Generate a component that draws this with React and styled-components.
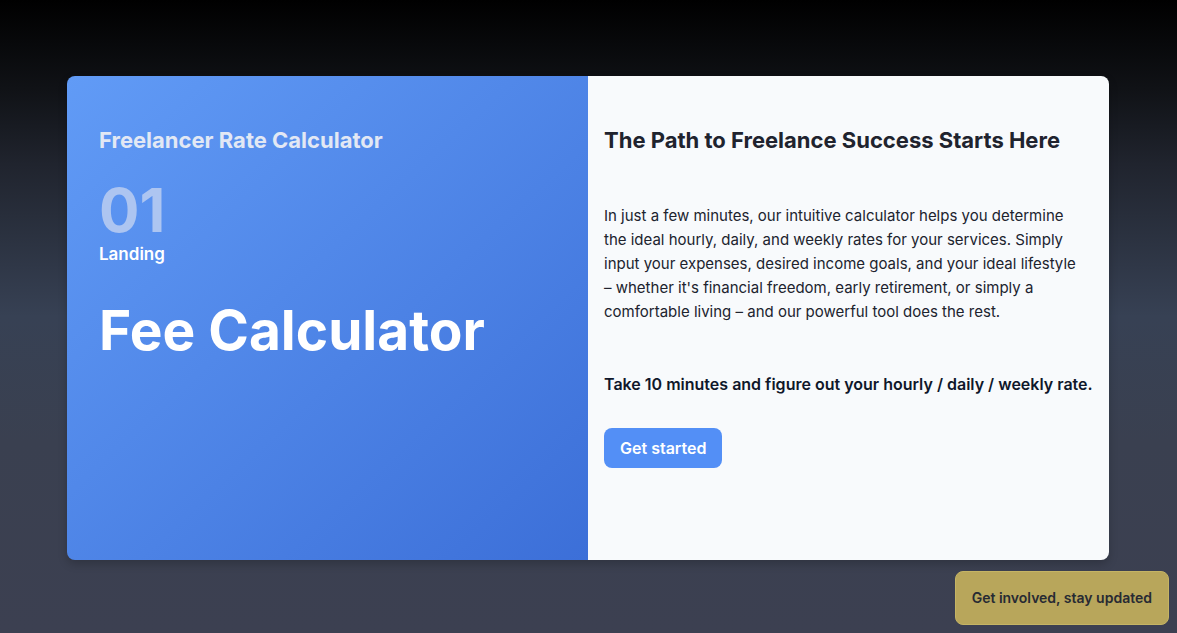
import React from "react";
import styled, { createGlobalStyle } from "styled-components";

const GlobalStyle = createGlobalStyle`
  *, *::before, *::after { box-sizing: border-box; }
  body {
    margin: 0;
    font-family: Inter, "Liberation Sans", sans-serif;
    font-size: 16px;
    line-height: 24px;
    color: #20232e;
  }
  h1, h2, p { margin: 0; }
`;

const Page = styled.main`
  min-height: 100vh;
  padding: 76px 68px 73px 67px;
  background: linear-gradient(to bottom, #000 0%, #101216 14%, #20242e 26%, #374154 50%, #3a4050 70%, #3c4051 100%);
  display: flex;
  flex-direction: column;
`;

const Card = styled.section`
  flex: 1;
  display: grid;
  grid-template-columns: 1fr 1fr;
  border-radius: 8px;
  overflow: hidden;
  box-shadow: 0 4px 10px rgba(0, 0, 0, 0.2);

  @media (max-width: 760px) {
    grid-template-columns: 1fr;
  }
`;

const Panel = styled.div`
  display: flex;
  flex-direction: column;
  align-items: flex-start;
`;

const IntroPanel = styled(Panel)`
  padding: 48px 32px;
  color: #fff;
  background: linear-gradient(to bottom right, #619bf6, #3c6fd8);
`;

const DetailPanel = styled(Panel)`
  padding: 48px 16px;
  background: #f8fafc;
`;

const Heading = styled.h2`
  font-size: 22px;
  line-height: 32px;
  font-weight: 700;
  color: ${({ $light }) => ($light ? "#e2e8f4" : "#20232e")};
`;

const StepNumber = styled.p`
  margin-top: 24px;
  font-size: 60px;
  line-height: 60px;
  font-weight: 700;
  color: #adc5f1;
`;

const StepName = styled.p`
  font-size: 17px;
  line-height: 28px;
  font-weight: 600;
`;

const Title = styled.h1`
  margin-top: 32px;
  font-size: 55px;
  line-height: 60px;
  font-weight: 700;
`;

const Description = styled.p`
  max-width: 480px;
  margin-top: 48px;
  font-size: 15px;
`;

const Callout = styled.p`
  margin-top: 48px;
  font-weight: 600;
  color: #0f172a;
`;

const StartButton = styled.button`
  margin-top: 32px;
  padding: 8px 16px;
  border: 0;
  border-radius: 8px;
  font: inherit;
  font-weight: 600;
  color: #fff;
  background: #538ff6;
  cursor: pointer;
`;

const UpdatesButton = styled.button`
  position: fixed;
  right: 8px;
  bottom: 8px;
  padding: 16px;
  border: 1px solid #c5b464;
  border-radius: 8px;
  font: inherit;
  font-size: 14px;
  line-height: 20px;
  font-weight: 600;
  color: #272a33;
  background: #b8a65b;
  cursor: pointer;
`;

export default function App() {
  return (
    <>
      <GlobalStyle />
      <Page>
        <Card>
          <IntroPanel>
            <Heading $light>Freelancer Rate Calculator</Heading>
            <StepNumber>01</StepNumber>
            <StepName>Landing</StepName>
            <Title>Fee Calculator</Title>
          </IntroPanel>
          <DetailPanel>
            <Heading>The Path to Freelance Success Starts Here</Heading>
            <Description>
              In just a few minutes, our intuitive calculator helps you determine the ideal hourly,
              daily, and weekly rates for your services. Simply input your expenses, desired income
              goals, and your ideal lifestyle – whether it's financial freedom, early retirement, or
              simply a comfortable living – and our powerful tool does the rest.
            </Description>
            <Callout>Take 10 minutes and figure out your hourly / daily / weekly rate.</Callout>
            <StartButton type="button">Get started</StartButton>
          </DetailPanel>
        </Card>
      </Page>
      <UpdatesButton type="button">Get involved, stay updated</UpdatesButton>
    </>
  );
}
